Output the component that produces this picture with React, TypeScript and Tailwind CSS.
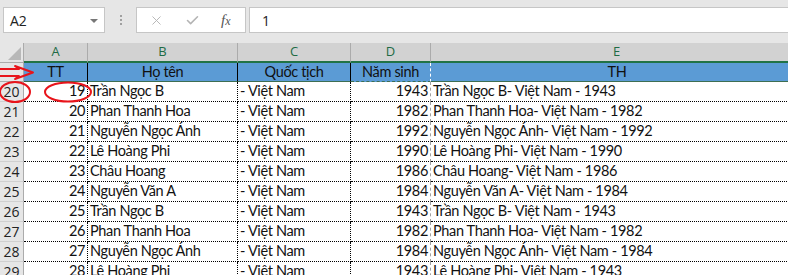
import { XIcon, CheckIcon } from "lucide-react";

const ROWS: Array<[number, number, string, number]> = [
  [20, 19, "Trần Ngọc B", 1943],
  [21, 20, "Phan Thanh Hoa", 1982],
  [22, 21, "Nguyễn Ngọc Ánh", 1992],
  [23, 22, "Lê Hoàng Phi", 1990],
  [24, 23, "Châu Hoang", 1986],
  [25, 24, "Nguyễn Văn A", 1984],
  [26, 25, "Trần Ngọc B", 1943],
  [27, 26, "Phan Thanh Hoa", 1982],
  [28, 27, "Nguyễn Ngọc Ánh", 1984],
  [29, 28, "Lê Hoàng Phi", 1943],
];

const ui = "font-['Open_Sans','Noto_Sans',sans-serif]";
const cell = "font-['Lato','Liberation_Sans',sans-serif] text-[14.5px] tracking-[-0.35px] leading-none text-[#111]";

function Toolbar() {
  return (
    <div className={`flex h-[43px] items-start bg-[#e6e6e6] pt-[7px] ${ui}`}>
      <div className="ml-[3px] flex h-[26px] w-[102px] items-center justify-between border border-[#c6c6c6] bg-white pl-[6px] pr-[6px] text-[14px] text-[#222]">
        <span>A2</span>
        <span className="mt-[1px] h-0 w-0 border-x-[4px] border-t-[4px] border-x-transparent border-t-[#777]" />
      </div>
      <div className="flex h-[26px] w-[31px] flex-col items-center justify-center gap-[2px]">
        <span className="size-[2px] bg-[#a0a0a0]" />
        <span className="size-[2px] bg-[#a0a0a0]" />
        <span className="size-[2px] bg-[#a0a0a0]" />
      </div>
      <div className="flex h-[26px] w-[110px] items-center border border-[#c6c6c6] bg-white">
        <XIcon className="ml-[12px] size-[15px] text-[#b4b4b4]" strokeWidth={1.5} />
        <CheckIcon className="ml-[21px] size-[15px] text-[#b4b4b4]" strokeWidth={2.5} />
        <span className="ml-[21px] font-['Liberation_Serif',serif] text-[15px] italic text-[#555]">
          f<span className="text-[12px]">x</span>
        </span>
      </div>
      <div className="ml-[3px] flex h-[26px] flex-1 items-center border border-r-0 border-[#c6c6c6] bg-white pl-[12px] text-[14px] text-[#222]">
        1
      </div>
    </div>
  );
}

function ColumnHeader() {
  const cols: Array<[string, string]> = [
    ["A", "w-[64px]"],
    ["B", "w-[150px]"],
    ["C", "w-[113px]"],
    ["D", "w-[80px]"],
    ["E", "w-[372px]"],
  ];
  return (
    <div className={`flex h-[20px] ${ui}`}>
      <div className="relative h-[20px] w-[24px] shrink-0 border-r border-b border-[#ababab] bg-[#e6e6e6]">
        <span className="absolute right-[2px] bottom-[2px] h-0 w-0 border-b-[13px] border-l-[13px] border-b-[#b8b8b8] border-l-transparent" />
      </div>
      {cols.map(([l, w]) => (
        <div
          key={l}
          className={`${w} flex h-[20px] shrink-0 items-center justify-center border-r border-b-2 border-r-[#ababab] border-b-[#217346] bg-[#d2d2d2] text-[13px] text-[#1e6b45]`}
        >
          {l}
        </div>
      ))}
    </div>
  );
}

function TitleRow() {
  const base = `flex h-[19px] shrink-0 items-center justify-center border-b border-b-[#3d6e52] bg-[#5b9bd5] ${cell}`;
  return (
    <div className="flex h-[19px]">
      <div className="h-[19px] w-[24px] shrink-0 border-r border-b border-[#ababab] bg-[#e6e6e6]" />
      <div className={`${base} w-[64px] border-r border-r-black`}>TT</div>
      <div className={`${base} w-[150px] border-r border-r-black`}>Họ tên</div>
      <div className={`${base} w-[113px] border-r border-r-black`}>Quốc tịch</div>
      <div className={`${base} w-[80px] border-r border-dashed border-r-white`}>Năm sinh</div>
      <div className={`${base} w-[372px]`}>TH</div>
    </div>
  );
}

function DataRow({ row }: { row: [number, number, string, number] }) {
  const [n, tt, name, year] = row;
  const base = `flex h-[20px] shrink-0 items-center border-b border-dotted border-b-black ${cell}`;
  return (
    <div className="flex h-[20px]">
      <div className={`flex h-[20px] w-[24px] shrink-0 items-center justify-center border-r border-b border-r-[#ababab] border-b-[#d0d0d0] bg-[#e6e6e6] text-[14px] text-[#222] ${ui}`}>
        {n}
      </div>
      <div className={`${base} w-[64px] justify-end border-r border-r-black pr-[2px]`}>{tt}</div>
      <div className={`${base} w-[150px] border-r border-r-black pl-[2px]`}>{name}</div>
      <div className={`${base} w-[113px] border-r border-r-black pl-[2px]`}>- Việt Nam</div>
      <div className={`${base} w-[80px] justify-end pr-[2px] [border-right:1px_dashed_#a0a0a0]`}>{year}</div>
      <div className={`${base} w-[372px] pl-[2px]`}>
        {name}- Việt Nam - {year}
      </div>
    </div>
  );
}

export default function App() {
  return (
    <div className="relative h-[275px] w-[788px] overflow-hidden bg-white">
      <Toolbar />
      <ColumnHeader />
      <TitleRow />
      {ROWS.map((r) => (
        <DataRow key={r[0]} row={r} />
      ))}
      <svg className="pointer-events-none absolute top-0 left-0" width="788" height="275">
        <g fill="none" stroke="#e8141b" strokeWidth="2">
          <ellipse cx="15" cy="92" rx="15" ry="10" />
          <ellipse cx="68" cy="92" rx="23" ry="9.5" />
          <path d="M0 69 H19 L15 66 L33 72.5 L15 79 L19 76 H0" strokeLinejoin="round" />
        </g>
      </svg>
    </div>
  );
}
